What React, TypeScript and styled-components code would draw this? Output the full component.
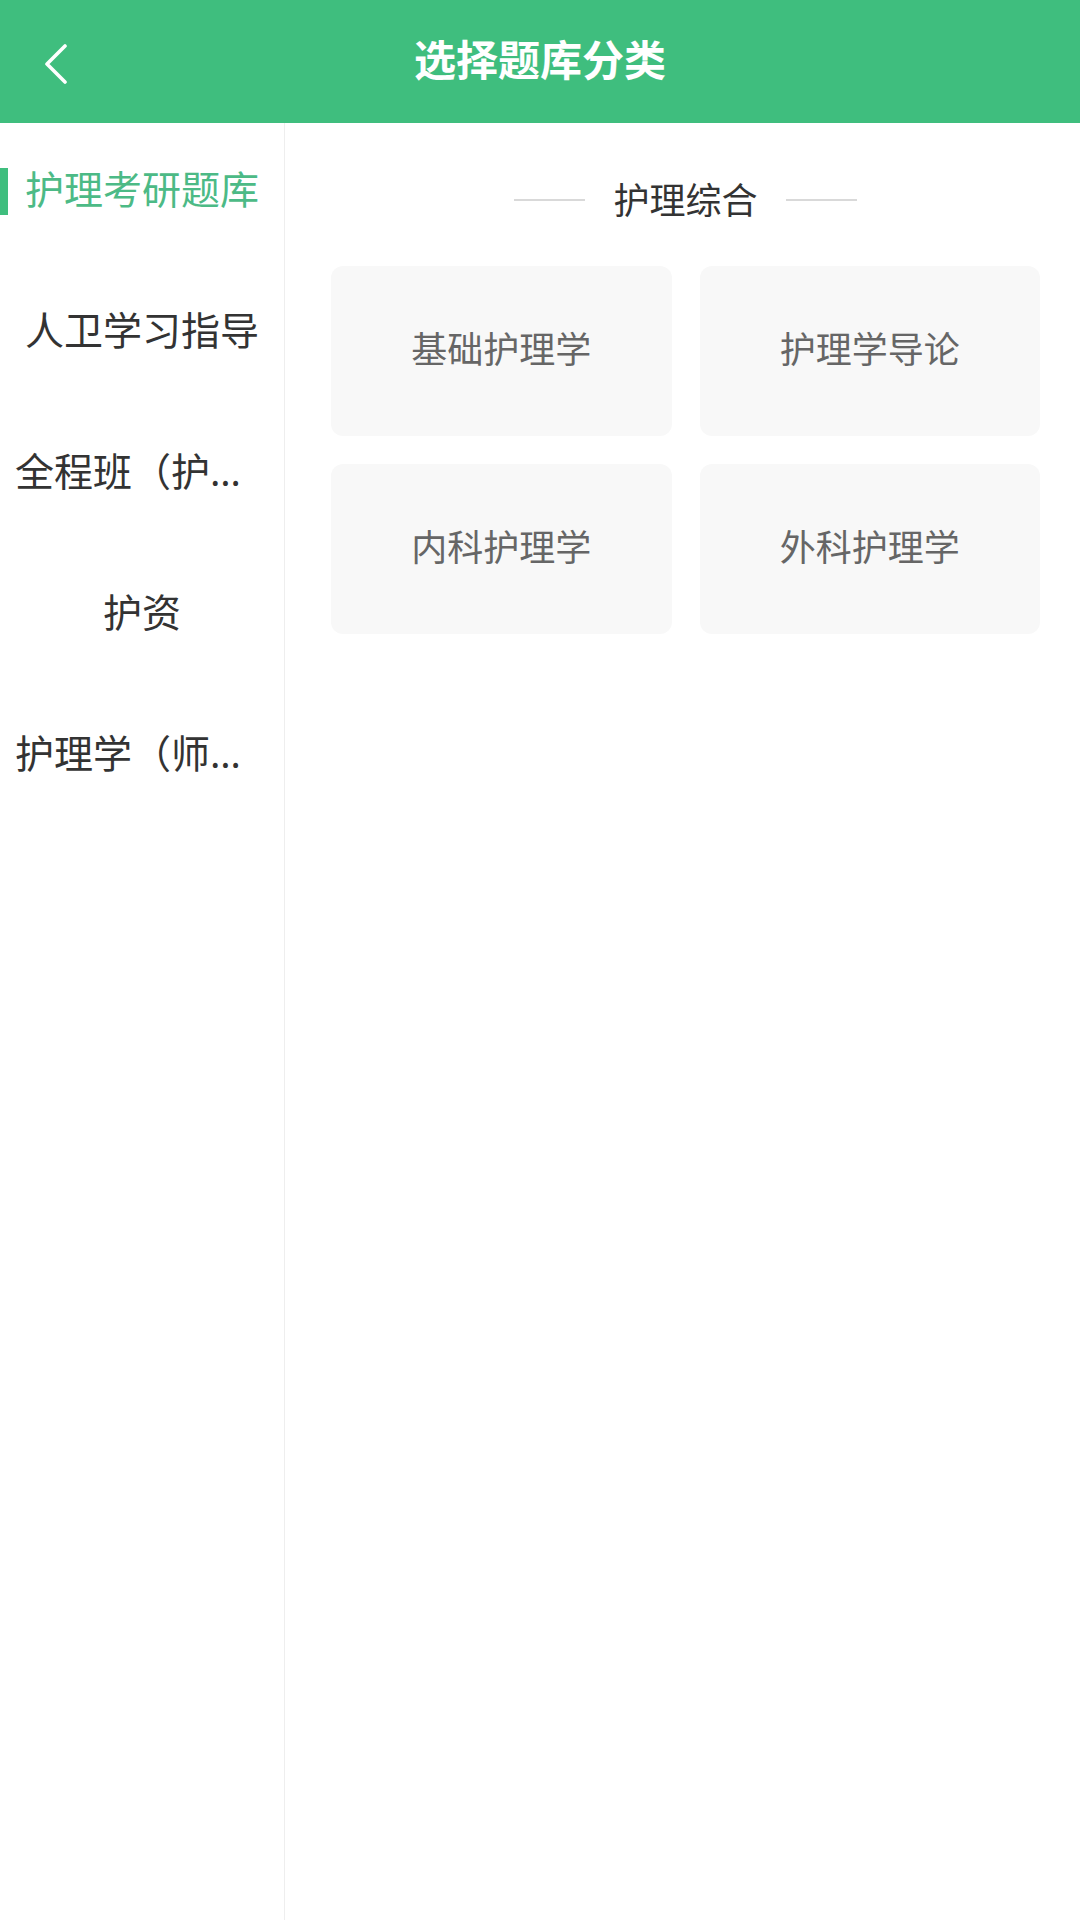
import React from "react";
import styled, { createGlobalStyle } from "styled-components";

const GlobalStyle = createGlobalStyle`
  html, body {
    margin: 0;
    padding: 0;
    background: #ffffff;
  }
  body {
    font-family: "Noto Sans CJK SC", "Noto Sans", sans-serif;
  }
  * { box-sizing: border-box; }
`;

const GREEN = "#3fbe7e";

const Page = styled.div`
  width: 1080px;
  min-height: 1920px;
  display: flex;
  flex-direction: column;
  background: #fff;
`;

const Header = styled.header`
  height: 123px;
  background: ${GREEN};
  display: grid;
  grid-template-columns: 1fr auto 1fr;
  align-items: center;
`;

const BackButton = styled.button`
  justify-self: start;
  margin-left: 38px;
  width: 36px;
  height: 48px;
  padding: 0;
  border: none;
  background: transparent;
  display: flex;
  align-items: center;
  justify-content: center;
  margin-top: 4px;
`;

const Title = styled.h1`
  margin: 0 0 8px;
  color: #fff;
  font-size: 42px;
  font-weight: 700;
  line-height: 1;
  letter-spacing: 0;
`;

const Body = styled.div`
  flex: 1;
  display: flex;
`;

const Sidebar = styled.nav`
  width: 285px;
  border-right: 1px solid #eeeeee;
  display: flex;
  flex-direction: column;
`;

const SideItem = styled.div<{ $active?: boolean }>`
  position: relative;
  height: 141px;
  padding: 0 15px 8px;
  display: flex;
  align-items: center;
  justify-content: center;
  font-size: 39px;
  color: ${(p) => (p.$active ? "#4cba86" : "#333333")};
`;

const SideText = styled.span`
  display: block;
  max-width: 100%;
  line-height: 1.6;
  font-family: "Noto Sans", "Noto Sans CJK SC", sans-serif;
  white-space: nowrap;
  overflow: hidden;
  text-overflow: ellipsis;
  text-align: center;
`;

const ActiveMark = styled.span`
  position: absolute;
  left: 0;
  top: 45px;
  width: 8px;
  height: 47px;
  background: ${GREEN};
`;

const Content = styled.main`
  flex: 1;
  padding: 52px 40px 0 46px;
  display: flex;
  flex-direction: column;
`;

const SectionHead = styled.div`
  height: 50px;
  display: flex;
  align-items: center;
  justify-content: center;
  gap: 28px;
  margin-bottom: 41px;
`;

const HeadLine = styled.span`
  width: 71px;
  height: 2px;
  background: #d9d9d9;
`;

const HeadText = styled.span`
  font-size: 36px;
  color: #333333;
  line-height: 1;
  margin-bottom: 4px;
`;

const Grid = styled.div`
  display: grid;
  grid-template-columns: 1fr 1fr;
  grid-auto-rows: 170px;
  gap: 28px;
`;

const Card = styled.div`
  background: #f8f8f8;
  border-radius: 12px;
  display: flex;
  align-items: center;
  justify-content: center;
  padding-bottom: 8px;
  font-size: 36px;
  line-height: 1;
  color: #666666;
`;

const sideItems = [
  "护理考研题库",
  "人卫学习指导",
  "全程班（护理考研）",
  "护资",
  "护理学（师范类）",
];

const cards = ["基础护理学", "护理学导论", "内科护理学", "外科护理学"];

export default function App() {
  return (
    <>
      <GlobalStyle />
      <Page>
        <Header>
          <BackButton aria-label="返回">
            <svg width="24" height="40" viewBox="0 0 24 40" fill="none">
              <path
                d="M21 2 L3 20 L21 38"
                stroke="#ffffff"
                strokeWidth="3.6"
                strokeLinecap="round"
                strokeLinejoin="round"
              />
            </svg>
          </BackButton>
          <Title>选择题库分类</Title>
          <span />
        </Header>
        <Body>
          <Sidebar>
            {sideItems.map((t, i) => (
              <SideItem key={t} $active={i === 0}>
                {i === 0 && <ActiveMark />}
                <SideText>{t}</SideText>
              </SideItem>
            ))}
          </Sidebar>
          <Content>
            <SectionHead>
              <HeadLine />
              <HeadText>护理综合</HeadText>
              <HeadLine />
            </SectionHead>
            <Grid>
              {cards.map((c) => (
                <Card key={c}>{c}</Card>
              ))}
            </Grid>
          </Content>
        </Body>
      </Page>
    </>
  );
}
